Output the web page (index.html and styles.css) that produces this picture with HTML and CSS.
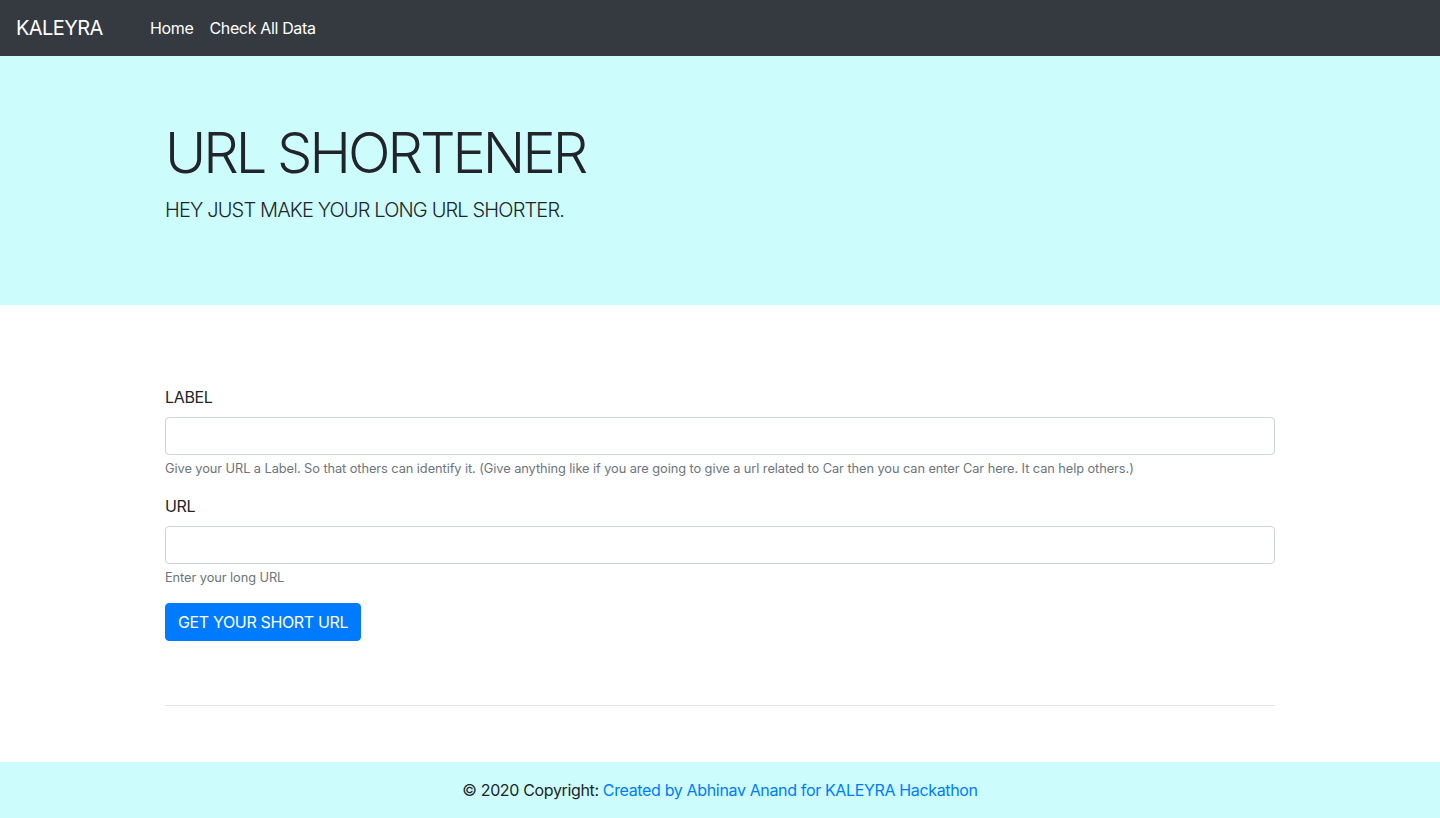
FILE: index.html
```html
<!DOCTYPE html>
<html lang="en">
<head>
<meta charset="utf-8">
<title>URL Shortener</title>
<link rel="stylesheet" href="styles.css">
</head>
<body>
<nav class="navbar">
  <a class="brand" href="#">KALEYRA</a>
  <ul class="nav">
    <li><a class="nav-link" href="#">Home</a></li>
    <li><a class="nav-link" href="#">Check All Data</a></li>
  </ul>
</nav>
<header class="jumbotron">
  <div class="container">
    <h1 class="display">URL SHORTENER</h1>
    <p class="lead">HEY JUST MAKE YOUR LONG URL SHORTER.</p>
  </div>
</header>
<main class="container main">
  <form class="form">
    <div class="form-group">
      <label for="label">LABEL</label>
      <input type="text" id="label" class="form-control">
      <small class="help">Give your URL a Label. So that others can identify it. (Give anything like if you are going to give a url related to Car then you can enter Car here. It can help others.)</small>
    </div>
    <div class="form-group">
      <label for="url">URL</label>
      <input type="text" id="url" class="form-control">
      <small class="help">Enter your long URL</small>
    </div>
    <button type="button" class="btn">GET YOUR SHORT URL</button>
  </form>
  <hr class="divider">
</main>
<footer class="footer">
  © 2020 Copyright: <a href="#">Created by Abhinav Anand for KALEYRA Hackathon</a>
</footer>
</body>
</html>
```
FILE: styles.css
```css
* { box-sizing: border-box; }
html, body { margin: 0; padding: 0; }
body {
  font-family: Inter, "Noto Sans", "Liberation Sans", sans-serif;
  font-size: 16px;
  line-height: 1.5;
  letter-spacing: -0.35px;
  color: #212529;
  background: #fff;
}
a { text-decoration: none; }

.navbar {
  height: 56px;
  background: #343a40;
  display: flex;
  align-items: center;
  padding: 8px 16px;
}
.brand {
  color: #fff;
  font-size: 20px;
  line-height: 30px;
  letter-spacing: -0.6px;
  margin-right: 40px;
  width: 86px;
}
.nav {
  display: flex;
  list-style: none;
  margin: 0;
  padding: 0;
}
.nav-link {
  display: block;
  color: #fff;
  padding: 8px 8px;
}

.container {
  width: 1140px;
  margin: 0 auto;
  padding: 0 15px;
}

.jumbotron {
  background: #ccfcfc;
  padding: 64px 0;
  margin-bottom: 32px;
}
.display {
  font-size: 56px;
  font-weight: 300;
  line-height: 1.2;
  margin: 0 0 8px;
  letter-spacing: -3px;
}
.lead {
  font-size: 20px;
  font-weight: 300;
  line-height: 30px;
  margin: 0 0 16px;
  letter-spacing: -0.85px;
}

.main { padding-top: 48px; }
.form-group { margin-bottom: 16px; }
label {
  display: block;
  line-height: 24px;
  margin-bottom: 8px;
}
.form-control {
  display: block;
  width: 100%;
  height: 38px;
  padding: 6px 12px;
  font: inherit;
  border: 1px solid #ced4da;
  border-radius: 4px;
  background: #fff;
}
.help {
  display: block;
  margin-top: 4px;
  font-size: 12.8px;
  line-height: 19px;
  letter-spacing: -0.07px;
  color: #6c757d;
}
.btn {
  display: block;
  font: inherit;
  letter-spacing: -0.35px;
  color: #fff;
  background: #007bff;
  border: 1px solid #007bff;
  border-radius: 4px;
  padding: 6px 12px;
  height: 38px;
  line-height: 24px;
}
.form { margin-bottom: 64px; }
.divider {
  border: 0;
  border-top: 1px solid rgba(0,0,0,.1);
  margin: 0 0 56px;
}

.footer {
  background: #ccfcfc;
  text-align: center;
  padding: 16px 0;
  line-height: 24px;
}
.footer a { color: #007bff; }
```
